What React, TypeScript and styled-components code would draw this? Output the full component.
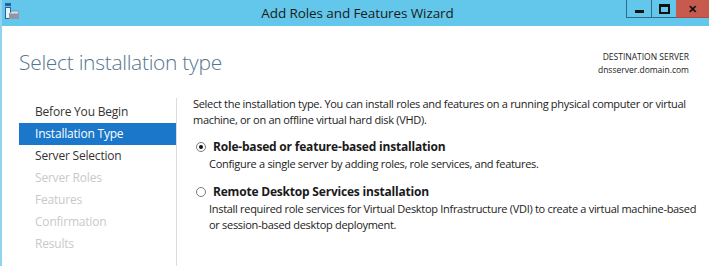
import styled, { createGlobalStyle } from "styled-components";

const Global = createGlobalStyle`
  html, body { margin: 0; padding: 0; background: #fff; }
  body { font-family: "Open Sans", "Noto Sans", sans-serif; color: #1e1e1e; }
`;

const Window = styled.div`
  width: 709px;
  height: 266px;
  overflow: hidden;
  background: #fff;
  border-left: 2px solid #8fd3ee;
  box-sizing: border-box;
  display: flex;
  flex-direction: column;
`;

const TitleBar = styled.div`
  height: 26px;
  flex: none;
  background: #62c7ea;
  position: relative;
  display: flex;
  align-items: center;
  justify-content: center;
`;

const AppIcon = styled.svg`
  position: absolute;
  left: 2px;
  top: 3px;
`;

const Title = styled.div`
  font-size: 13.5px;
  letter-spacing: -0.1px;
  color: #1b1b1b;
  margin-left: 4px;
`;

const Controls = styled.div`
  position: absolute;
  right: 0;
  top: 0;
  display: flex;
`;

const CtrlButton = styled.div<{ $close?: boolean }>`
  width: ${(p) => (p.$close ? "33px" : "25px")};
  height: 18px;
  box-sizing: border-box;
  border-bottom: 1px solid ${(p) => (p.$close ? "#b34a40" : "#2f6c85")};
  border-left: ${(p) => (p.$close ? "none" : "1px solid #2f6c85")};
  background: ${(p) => (p.$close ? "#c75a4f" : "#62c7ea")};
  display: flex;
  align-items: center;
  justify-content: center;
  color: #111;
  font-size: 11px;
  font-weight: bold;
`;

const MinGlyph = styled.div`
  width: 9px;
  height: 3px;
  background: #111;
  margin-top: 5px;
`;

const MaxGlyph = styled.div`
  width: 7px;
  height: 5px;
  border: 2px solid #111;
  border-top-width: 3px;
`;

const Header = styled.div`
  display: flex;
  justify-content: space-between;
  align-items: flex-start;
  padding: 22px 20px 0 17px;
  height: 70px;
  box-sizing: border-box;
  flex: none;
`;

const Heading = styled.h1`
  margin: 0;
  font-weight: 300;
  font-size: 21px;
  color: #55758f;
  letter-spacing: -0.3px;
`;

const Destination = styled.div`
  text-align: right;
  font-size: 8.5px;
  line-height: 13px;
  color: #222;
  padding-top: 2px;
`;

const Body = styled.div`
  display: flex;
  flex: 1;
`;

const Nav = styled.ul`
  list-style: none;
  margin: 2px 0 0 17px;
  padding: 3px 0 0;
  width: 158px;
  border-right: 1px solid #dcdcdc;
  box-sizing: border-box;
  flex: none;
`;

const NavItem = styled.li<{ $state: "done" | "active" | "todo" }>`
  height: 22px;
  line-height: 22px;
  padding-left: 16px;
  font-size: 12px;
  letter-spacing: -0.2px;
  background: ${(p) => (p.$state === "active" ? "#1a77c9" : "transparent")};
  color: ${(p) =>
    p.$state === "active" ? "#fff" : p.$state === "done" ? "#333" : "#c9c9c9"};
`;

const Content = styled.div`
  padding: 0 0 0 16px;
  font-size: 11px;
  line-height: 16px;
  letter-spacing: -0.3px;
  color: #222;
  white-space: nowrap;
`;

const Intro = styled.p`
  margin: 0 0 10px;
`;

const Option = styled.div`
  margin-bottom: 11px;
`;

const OptionLabel = styled.label`
  display: flex;
  align-items: center;
  font-weight: bold;
  font-size: 12px;
  letter-spacing: -0.2px;
  height: 18px;
  color: #1a1a1a;
`;

const Radio = styled.span<{ $checked?: boolean }>`
  width: 10px;
  height: 10px;
  border-radius: 50%;
  border: 1px solid #7a7a7a;
  box-sizing: border-box;
  margin: 0 7px 0 3px;
  display: flex;
  align-items: center;
  justify-content: center;
  &::after {
    content: "";
    width: 4px;
    height: 4px;
    border-radius: 50%;
    background: ${(p) => (p.$checked ? "#111" : "transparent")};
  }
`;

const OptionDesc = styled.div`
  padding-left: 16px;
`;

const steps: { label: string; state: "done" | "active" | "todo" }[] = [
  { label: "Before You Begin", state: "done" },
  { label: "Installation Type", state: "active" },
  { label: "Server Selection", state: "done" },
  { label: "Server Roles", state: "todo" },
  { label: "Features", state: "todo" },
  { label: "Confirmation", state: "todo" },
  { label: "Results", state: "todo" },
];

export default function App() {
  return (
    <>
      <Global />
      <Window>
        <TitleBar>
          <AppIcon width="16" height="18" viewBox="0 0 16 18">
            <rect x="1" y="0" width="6" height="3" fill="#2a5f9e" />
            <rect x="1" y="4" width="6" height="12" fill="#2a5f9e" />
            <rect x="2" y="5" width="4" height="10" fill="#e8f2fa" />
            <path d="M5 11 L8 8 L14 8 L15 11 Z" fill="#d8dde4" stroke="#6a7a8a" strokeWidth="0.6" />
            <rect x="5" y="11" width="10" height="5" fill="#8a98a8" />
          </AppIcon>
          <Title>Add Roles and Features Wizard</Title>
          <Controls>
            <CtrlButton>
              <MinGlyph />
            </CtrlButton>
            <CtrlButton>
              <MaxGlyph />
            </CtrlButton>
            <CtrlButton $close>✕</CtrlButton>
          </Controls>
        </TitleBar>
        <Header>
          <Heading>Select installation type</Heading>
          <Destination>
            DESTINATION SERVER
            <br />
            dnsserver.domain.com
          </Destination>
        </Header>
        <Body>
          <Nav>
            {steps.map((s) => (
              <NavItem key={s.label} $state={s.state}>
                {s.label}
              </NavItem>
            ))}
          </Nav>
          <Content>
            <Intro>
              Select the installation type. You can install roles and features on a running physical computer or virtual
              <br />
              machine, or on an offline virtual hard disk (VHD).
            </Intro>
            <Option>
              <OptionLabel>
                <Radio $checked />
                Role-based or feature-based installation
              </OptionLabel>
              <OptionDesc>
                Configure a single server by adding roles, role services, and features.
              </OptionDesc>
            </Option>
            <Option>
              <OptionLabel>
                <Radio />
                Remote Desktop Services installation
              </OptionLabel>
              <OptionDesc>
                Install required role services for Virtual Desktop Infrastructure (VDI) to create a virtual machine-based
                <br />
                or session-based desktop deployment.
              </OptionDesc>
            </Option>
          </Content>
        </Body>
      </Window>
    </>
  );
}
